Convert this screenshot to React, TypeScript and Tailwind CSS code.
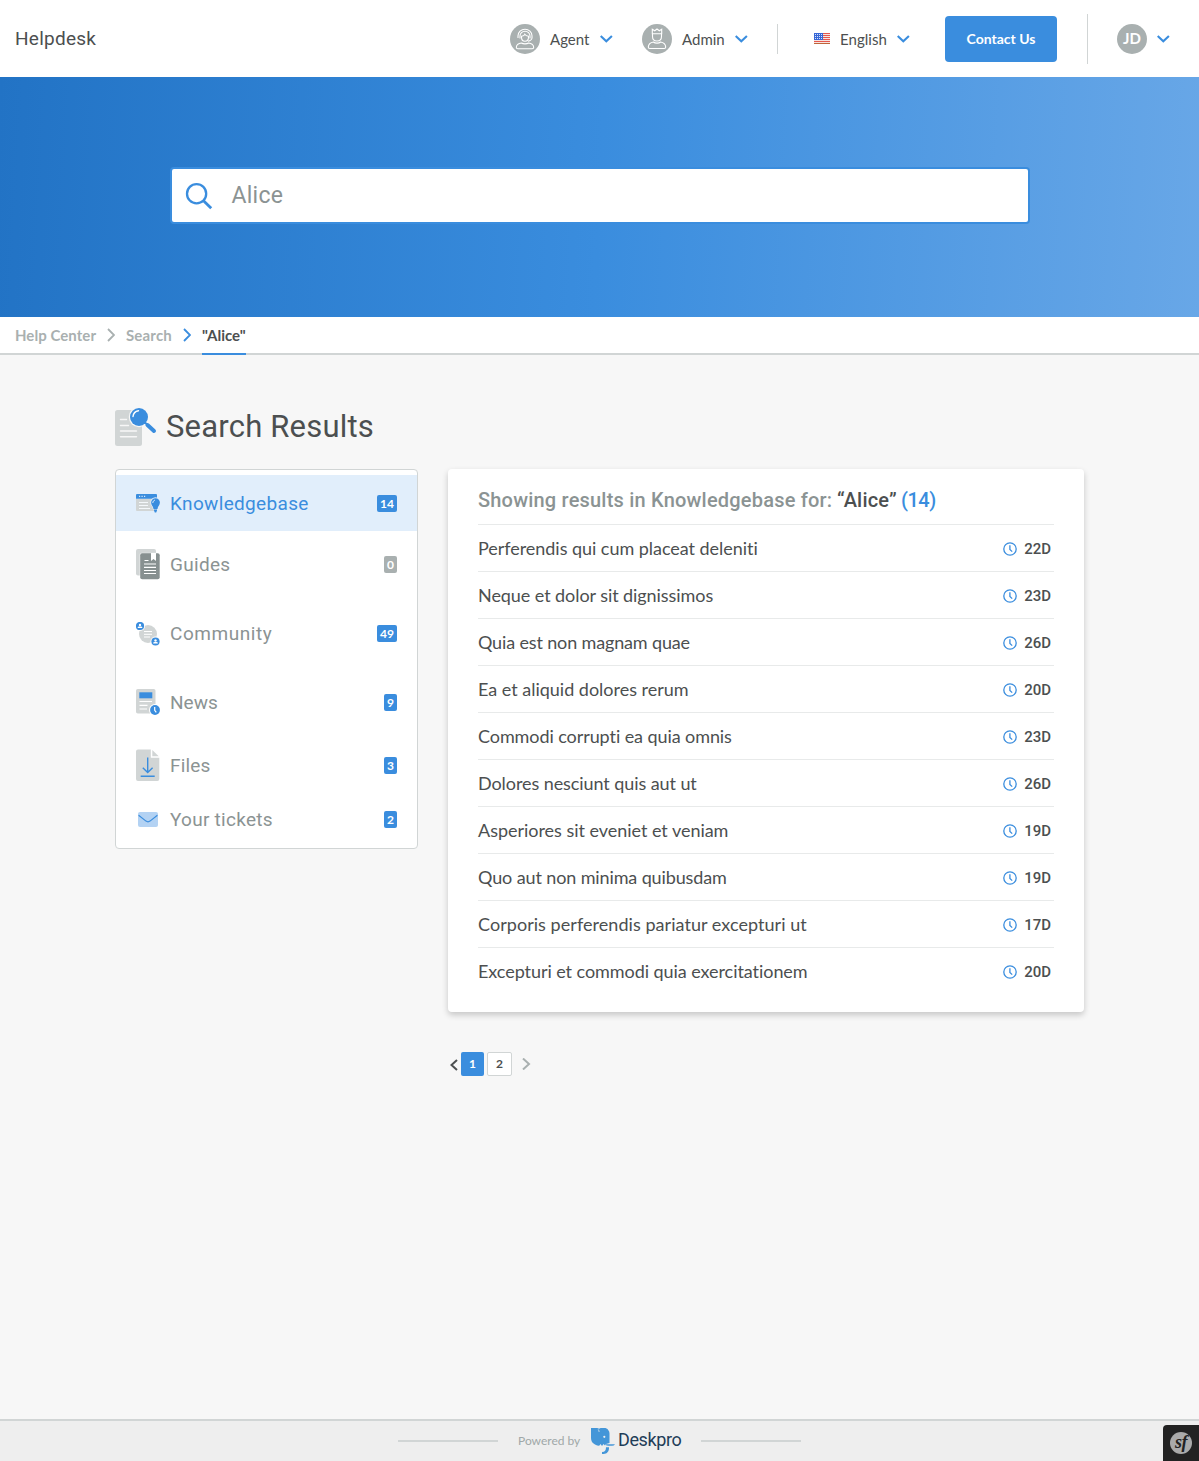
import type { ReactNode } from 'react';

const results = [
  { title: 'Perferendis qui cum placeat deleniti', age: '22D', tracking: 'tracking-[-0.04px]' },
  { title: 'Neque et dolor sit dignissimos', age: '23D', tracking: 'tracking-[-0.07px]' },
  { title: 'Quia est non magnam quae', age: '26D', tracking: 'tracking-[-0.15px]' },
  { title: 'Ea et aliquid dolores rerum', age: '20D', tracking: 'tracking-[-0.01px]' },
  { title: 'Commodi corrupti ea quia omnis', age: '23D', tracking: 'tracking-[-0.08px]' },
  { title: 'Dolores nesciunt quis aut ut', age: '26D', tracking: 'tracking-[-0.08px]' },
  { title: 'Asperiores sit eveniet et veniam', age: '19D', tracking: 'tracking-[-0.03px]' },
  { title: 'Quo aut non minima quibusdam', age: '19D', tracking: 'tracking-[-0.12px]' },
  { title: 'Corporis perferendis pariatur excepturi ut', age: '17D', tracking: 'tracking-[0.05px]' },
  { title: 'Excepturi et commodi quia exercitationem', age: '20D', tracking: 'tracking-[-0.06px]' },
];

function Chevron({ className = '' }: { className?: string }) {
  return (
    <svg className={className} width="13" height="8" viewBox="0 0 13 8" fill="none" stroke="#3a8dde" strokeWidth="2.1">
      <path d="M0.7 1 6.300 6.300 11.900 1" />
    </svg>
  );
}

function RightArrow({ color }: { color: string }) {
  return (
    <svg width="8" height="14" viewBox="0 0 8 14" fill="none" stroke={color} strokeWidth="1.8">
      <path d="M1 1 7 7 1 13" />
    </svg>
  );
}

function AgentIcon() {
  return (
    <svg width="30" height="30" viewBox="0 0 30 30" fill="none" stroke="#fff" strokeWidth="1.1">
      <circle cx="15" cy="15" r="15" fill="#a9b0b0" stroke="none" />
      <path d="M8 14v-2.300a7 6.500 0 0 1 14 0V14q-.3 2.500-4 3.200" />
      <path d="M10 14.500V12a5 4.800 0 0 1 10 0v2.500" />
      <path d="M11.500 12.300c1.900-.2 2.900-.8 3.300-2 .8 1.300 1.900 1.900 3.700 2v1c0 2.300-1.500 4-3.500 4s-3.500-1.700-3.500-4Z" />
      <path d="M11.500 19c-3.300.4-5 1.600-5.200 4.200q0 1.500 1.500 1.500h14.400q1.500 0 1.500-1.500c-.2-2.600-1.900-3.800-5.200-4.200-1.500 1.200-5.500 1.200-7 0Z" />
    </svg>
  );
}

function AdminIcon() {
  return (
    <svg width="30" height="30" viewBox="0 0 30 30" fill="none" stroke="#fff" strokeWidth="1.1">
      <circle cx="15" cy="15" r="15" fill="#a9b0b0" stroke="none" />
      <path d="M10.300 9.800V5.300l2.400 1.500L15 5l2.300 1.800 2.400-1.500v4.500ZM10.500 9.800v2.700c0 2.700 1.900 4.500 4.500 4.500s4.500-1.800 4.500-4.500V9.800" />
      <path d="M11.500 18c-3.300.6-5 2-5.200 5q0 1.500 1.500 1.500h14.400q1.500 0 1.500-1.500c-.2-3-1.900-4.400-5.200-5-1.500 1.500-5.500 1.500-7 0Z" />
    </svg>
  );
}

function FlagIcon() {
  return (
    <svg width="16" height="11" viewBox="0 0 16 11">
      <rect width="16" height="11" fill="#f7e4e0" />
      {[0, 2, 4, 6, 8, 10].map((y) => (
        <rect key={y} y={y} width="16" height="1" fill={y === 10 ? '#c0653a' : '#e5584e'} />
      ))}
      <rect width="9" height="7" fill="#3767d6" />
      {[1, 3, 5].map((y) =>
        [1, 3, 5, 7].map((x) => <rect key={`${x}-${y}`} x={x} y={y} width="1" height="1" fill="#d5e2fb" />),
      )}
    </svg>
  );
}

function SearchDocIcon() {
  return (
    <svg width="42" height="40" viewBox="0 0 42 40">
      <rect x="0" y="3" width="27" height="36" rx="2.500" fill="#d1d5d5" />
      <path d="M5.500 12.500h6M5.500 18.500h8M5.500 24h16M5.500 29.700h16" stroke="#f7f7f7" strokeWidth="1.400" strokeLinecap="round" />
      <circle cx="24" cy="10" r="10.200" fill="#f7f7f7" />
      <path d="M29.500 15 34 19.500" stroke="#3a8dde" strokeWidth="2" />
      <path d="M32.500 18 39 24" stroke="#3a8dde" strokeWidth="4" strokeLinecap="round" />
      <circle cx="24" cy="10" r="9" fill="#3a8dde" />
      <path d="M18 9.500c.3-3.300 2.300-5.300 5.500-5.800" stroke="#fff" strokeWidth="1.400" fill="none" strokeLinecap="round" />
    </svg>
  );
}

function KnowledgeIcon() {
  return (
    <svg width="24" height="19" viewBox="0 0 24 19">
      <path d="M0 5h21v11a1 1 0 0 1-1 1H1a1 1 0 0 1-1-1Z" fill="#d1d5d5" />
      <path d="M1 0h19a1 1 0 0 1 1 1v3.800H0V1a1 1 0 0 1 1-1Z" fill="#3a8dde" />
      <path d="M3 2.300h1.200M5.500 2.300h1.200M8 2.300h1.200" stroke="#fff" />
      <path d="M3 8.500h9M3 11.500h9M3 14.500h11" stroke="#f4f8fb" strokeWidth="1" />
      <path d="M19.500 3.200a5.200 5.200 0 0 1 5.200 5.200c0 3-2.600 4-2.600 7H17c0-3-2.700-4-2.700-7a5.200 5.200 0 0 1 5.200-5.200Z" fill="#e1eefb" />
      <path d="M19.500 4.300a4.300 4.300 0 0 1 4.400 4.300c0 2.700-2.100 3.700-2.400 6.300h-4c-.3-2.600-2.400-3.600-2.400-6.300a4.300 4.300 0 0 1 4.400-4.300ZM18 15.600h3v1l-.8 1.900h-1.400L18 16.600Z" fill="#3a8dde" />
      <path d="M16.800 9c0-1.500.8-2.600 2.200-2.900" stroke="#fff" fill="none" strokeWidth=".8" />
    </svg>
  );
}

function GuidesIcon() {
  return (
    <svg width="24" height="31" viewBox="0 0 24 31">
      <rect width="20" height="26.500" rx="2" fill="#d1d5d5" />
      <rect x="3.500" y="3.800" width="21" height="27" rx="2" fill="#fff" opacity=".5" />
      <rect x="4.200" y="4.300" width="19.500" height="26" rx="2" fill="#879090" />
      <path d="M15 4h5v8l-2.500-2L15 12Z" fill="#fff" />
      <path d="M8.500 11.500h4M8 15h12M8 18.300h12M8 21.500h12M8 24.500h12" stroke="#fff" strokeWidth="1.200" />
    </svg>
  );
}

function CommunityIcon() {
  return (
    <svg width="24" height="24" viewBox="0 0 24 24">
      <circle cx="12" cy="12" r="9" fill="#d1d5d5" />
      <path d="M8 9.500h8M8 12.300h8M8 15h6" stroke="#fff" strokeWidth="1" />
      {[[4, 4], [19.500, 19.500]].map(([x, y]) => (
        <g key={x} transform={`translate(${x} ${y})`}>
          <circle r="5" fill="#fff" />
          <circle r="4.100" fill="#3a8dde" />
          <circle cy="-1" r="1.200" fill="#fff" />
          <path d="M-2.300 2V1.500q0-1 1.300-1h2q1.300 0 1.300 1V2Z" fill="#fff" />
        </g>
      ))}
    </svg>
  );
}

function NewsIcon() {
  return (
    <svg width="24" height="27" viewBox="0 0 24 27">
      <rect width="19.500" height="24.500" rx="1.800" fill="#d1d5d5" />
      <rect x="3.300" y="3.300" width="13" height="6" fill="#3a8dde" />
      <path d="M3.500 12.500h12.500M3.500 16.300h8M3.500 20h7.500" stroke="#fff" strokeWidth="1.200" />
      <circle cx="19" cy="21" r="6" fill="#fff" />
      <circle cx="19" cy="21" r="4.900" fill="#3a8dde" />
      <path d="M18.700 18v3.300l1.600 2" stroke="#fff" strokeWidth="1.200" fill="none" />
    </svg>
  );
}

function FilesIcon() {
  return (
    <svg width="24" height="33" viewBox="0 0 24 33">
      <path d="M2 .5h12.800v8.300h8.500V30a2 2 0 0 1-2 2H2a2 2 0 0 1-2-2V2.500a2 2 0 0 1 2-2Z" fill="#d1d5d5" />
      <path d="M16.300 1 22.700 7.300h-6.400Z" fill="#d1d5d5" />
      <path d="M11.700 8.500v15M6.800 18.700l4.900 4.900 4.900-4.900M4.700 27.300h14" stroke="#3a8dde" strokeWidth="1.400" fill="none" />
    </svg>
  );
}

function MailIcon() {
  return (
    <svg width="24" height="15" viewBox="0 0 24 15">
      <rect x="2" y="0" width="20" height="15" rx="2" fill="#b3d2f3" />
      <path d="m2.600 3.300 7.400 5.800q2 1.400 4 0l7.400-5.800" stroke="#3a8dde" strokeWidth="1.200" fill="none" />
    </svg>
  );
}

function ClockIcon() {
  return (
    <svg width="14" height="14" viewBox="0 0 14 14" fill="none" stroke="#3a8dde" strokeWidth="1.300">
      <circle cx="7" cy="7" r="6.200" />
      <path d="M6.900 3.200v4.200l2.300 2.200" />
    </svg>
  );
}

function DeskproIcon() {
  return (
    <svg width="24" height="26" viewBox="0 0 24 26">
      <path d="M0 0h6.500q1 0 1.500 1Q8.500 0 10 0h4.500Q17 .5 17.500 2.500q1 1 1 3V15l-3.500 1-1 1.500-1.500-1.500-1.500 2-1.500-2-1 1.500Q6 18 4 16.500 0 14.500 0 10Z" fill="#4496d8" />
      <path d="M15 16.300h9q-1 1.500-3 1.500h-4l-2-.5Z" fill="#4496d8" />
      <path d="M15 19.300h3c.2 4-1.800 6.700-5.500 6.700H11v-1.900c3 0 4-1.800 4-4.800Z" fill="#4496d8" />
      <path d="M6.800 1.300q1.500.7 1.300 2.700" stroke="#eee" strokeWidth=".7" fill="none" />
      <circle cx="13.300" cy="8.800" r="1.100" fill="#eee" />
    </svg>
  );
}

const categories: { label: string; count: number; row: string; tracking: string; icon: ReactNode }[] = [
  { label: 'Knowledgebase', count: 14, row: 'h-14 bg-[#e1eefb] text-[#3a8dde]', tracking: 'tracking-[0.34px]', icon: <KnowledgeIcon /> },
  { label: 'Guides', count: 0, row: 'h-[67px] text-[#8b9393]', tracking: 'tracking-[0.3px]', icon: <GuidesIcon /> },
  { label: 'Community', count: 49, row: 'h-[71px] text-[#8b9393]', tracking: 'tracking-[0.55px]', icon: <CommunityIcon /> },
  { label: 'News', count: 9, row: 'h-[67px] text-[#8b9393]', tracking: 'tracking-normal', icon: <NewsIcon /> },
  { label: 'Files', count: 3, row: 'h-[59px] text-[#8b9393]', tracking: 'tracking-[0.15px]', icon: <FilesIcon /> },
  { label: 'Your tickets', count: 2, row: 'h-[49px] text-[#8b9393]', tracking: 'tracking-[0.27px]', icon: <MailIcon /> },
];

export default function App() {
  return (
    <div className="flex h-[1461px] w-[1199px] flex-col bg-[#f7f7f7] font-[Lato,sans-serif] text-[#4c4f50]">
      <header className="flex h-[77px] shrink-0 items-center bg-white pr-[29px] pl-[15px] text-[15px]">
        <span className="mt-[2px] font-[Roboto,sans-serif] text-[19px] tracking-[0.25px]">Helpdesk</span>
        <div className="ml-auto flex items-center">
          <AgentIcon />
          <span className="mt-[2px] ml-[10px] w-[40px]">Agent</span>
          <Chevron className="ml-[10px]" />
          <span className="ml-[29px]"><AdminIcon /></span>
          <span className="mt-[2px] ml-[10px] w-[43px]">Admin</span>
          <Chevron className="ml-[10px]" />
          <span className="ml-[29px] h-[30px] w-px bg-[#d1d5d5]" />
          <span className="ml-[36px]"><FlagIcon /></span>
          <span className="mt-[2px] ml-[10px] w-[47px] tracking-[0.04px]">English</span>
          <Chevron className="ml-[10px]" />
          <button className="ml-[35px] h-[46px] w-[112px] rounded-[4px] bg-[#3a8dde] text-[14px] font-bold text-white">Contact Us</button>
          <span className="ml-[30px] h-[50px] w-px bg-[#d1d5d5]" />
          <span className="ml-[29px] flex size-[30px] items-center justify-center rounded-full bg-[#a9b0b0] font-bold text-white">JD</span>
          <Chevron className="ml-[10px]" />
        </div>
      </header>

      <section className="flex h-[240px] shrink-0 justify-center bg-[linear-gradient(93deg,#2273c5_0%,#3a8dde_50%,#68a7e7_100%)] pt-[90px]">
        <div className="flex h-[57px] w-[860px] items-center rounded-[4px] border-2 border-[#3a8dde] bg-white pl-[13px]">
          <svg width="28" height="28" viewBox="0 0 28 28" fill="none" stroke="#3a8dde" strokeWidth="2.300">
            <circle cx="11.600" cy="11.700" r="9.600" />
            <path d="m18.500 18.700 7.700 7.600" strokeWidth="2.800" />
          </svg>
          <span className="mt-[2px] ml-[19px] font-[Roboto,sans-serif] text-[23px] tracking-[0.25px] text-[#8b9393]">Alice</span>
        </div>
      </section>

      <nav className="flex h-[38px] shrink-0 items-start border-b-2 border-[#d1d5d5] bg-white pl-[15px] text-[15px] font-bold text-[#a9b0b0]">
        <span className="w-[81px] leading-[37px] tracking-[0.05px] whitespace-nowrap">Help Center</span>
        <span className="mt-[11px] ml-[11px]"><RightArrow color="#a9b0b0" /></span>
        <span className="ml-[11px] w-[46px] leading-[37px] tracking-[0.17px]">Search</span>
        <span className="mt-[11px] ml-[11px]"><RightArrow color="#3a8dde" /></span>
        <span className="ml-[11px] h-[38px] w-[44px] border-b-2 border-[#3a8dde] leading-[37px] text-[#4c4f50]">"Alice"</span>
      </nav>

      <main className="flex flex-1 flex-col pl-[115px]">
        <div className="mt-[52px] flex h-10 items-center">
          <SearchDocIcon />
          <h1 className="mt-px ml-[9px] font-[Roboto,sans-serif] text-[31px] tracking-[0.2px]">Search Results</h1>
        </div>
        <div className="mt-[22px] flex items-start gap-[30px]">
          <aside className="h-[380px] w-[303px] rounded-[4px] border border-[#d1d5d5] bg-white pt-[5px]">
            {categories.map((c) => (
              <div key={c.label} className={`flex items-center px-5 ${c.row}`}>
                {c.icon}
                <span className={`mt-[2px] ml-[10px] font-[Roboto,sans-serif] text-[19px] ${c.tracking}`}>{c.label}</span>
                <span className={`ml-auto rounded-[2px] px-[3px] text-[12px] leading-[17px] font-bold text-white ${c.count ? 'bg-[#3a8dde]' : 'bg-[#a9b0b0]'}`}>{c.count}</span>
              </div>
            ))}
          </aside>
          <div>
            <section className="h-[543px] w-[636px] rounded-[4px] bg-white px-[30px] shadow-[0_3px_6px_rgba(0,0,0,0.2)]">
              <h2 className="flex h-[55px] font-[Roboto,sans-serif] text-[20px] leading-[63px] font-medium whitespace-nowrap text-[#8b9393]">
                <span className="w-[359px] tracking-[0.2px]">Showing results in Knowledgebase for:</span>
                <span className="w-[64px] tracking-[0.2px] text-[#4c4f50]">“Alice”</span>
                <span className="tracking-[-0.5px] text-[#3a8dde]">(14)</span>
              </h2>
              {results.map((r) => (
                <div key={r.title} className="flex h-[47px] w-[576px] items-center border-t border-[#e8eaea] pr-[3px]">
                  <span className={`text-[18px] ${r.tracking}`}>{r.title}</span>
                  <span className="mt-px ml-auto flex items-center gap-[7px]">
                    <ClockIcon />
                    <span className="font-[Roboto,sans-serif] text-[15px] leading-[22px] font-medium">{r.age}</span>
                  </span>
                </div>
              ))}
            </section>
            <div className="mt-[40px] flex h-6 items-center text-[12px] font-bold">
              <svg className="mt-px ml-[2px]" width="8" height="12" viewBox="0 0 8 12" fill="none" stroke="#4c4f50" strokeWidth="2"><path d="M7 1 1.500 6 7 11" /></svg>
              <span className="ml-[3px] h-6 w-[23px] rounded-[2px] bg-[#3a8dde] text-center leading-6 text-white">1</span>
              <span className="ml-[3px] h-6 w-[25px] rounded-[2px] border border-[#d1d5d5] bg-white text-center leading-[22px]">2</span>
              <svg className="ml-[10px]" width="9" height="12" viewBox="0 0 9 12" fill="none" stroke="#a9b0b0" strokeWidth="2"><path d="M1 .5 7 6 1 11.500" /></svg>
            </div>
          </div>
        </div>
      </main>

      <footer className="relative flex h-[42px] shrink-0 items-center justify-center border-t-2 border-[#d1d5d5] bg-[#eee]">
        <span className="h-[2px] w-[100px] bg-[#d1d5d5]" />
        <span className="ml-[20px] w-[62px] text-[12px] whitespace-nowrap text-[#a0a8a8]">Powered by</span>
        <span className="ml-[11px]"><DeskproIcon /></span>
        <span className="mb-[3px] ml-[3px] w-[64px] font-[Roboto,sans-serif] text-[18px] tracking-[-0.37px] text-[#1f3d58]">Deskpro</span>
        <span className="ml-[19px] h-[2px] w-[100px] bg-[#d1d5d5]" />
        <div className="absolute right-0 bottom-0 flex size-9 items-center justify-center rounded-tl-[4px] bg-[#222]">
          <span className="flex size-[22px] items-center justify-center rounded-full bg-[#aaa] pb-[2px] font-['Liberation_Serif',serif] text-[18px] leading-none font-bold tracking-[-0.5px] text-[#222] italic">sf</span>
        </div>
      </footer>
    </div>
  );
}
